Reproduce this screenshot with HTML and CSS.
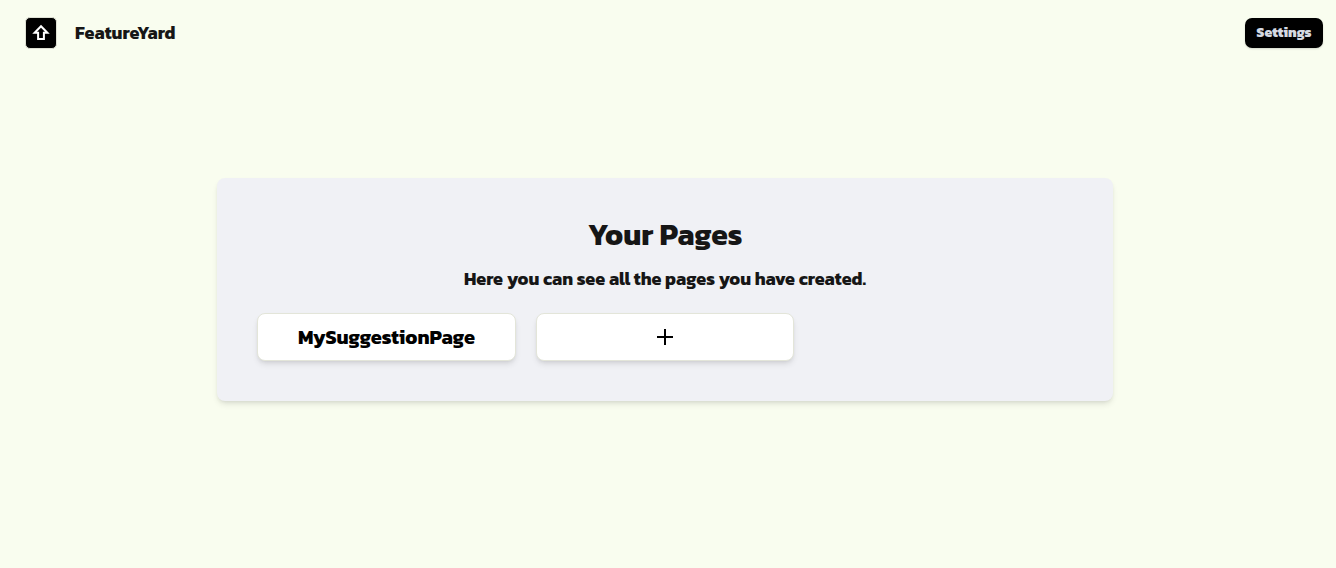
FILE: index.html
```html
<!DOCTYPE html>
<html lang="en">
<head>
  <meta charset="UTF-8">
  <title>FeatureYard</title>
  <link rel="stylesheet" href="styles.css">
</head>
<body>
  <header class="navbar">
    <a class="brand">
      <span class="logo">
        <svg width="20" height="20" viewBox="0 0 20 20" fill="none" stroke="#fff" stroke-width="2">
          <path d="M10 3.2 L3.6 9.8 H7.1 V16.1 H12.9 V9.8 H16.4 Z"/>
        </svg>
      </span>
      <span class="brand-name">FeatureYard</span>
    </a>
    <button class="settings">Settings</button>
  </header>

  <main class="content">
    <section class="panel">
      <h1>Your Pages</h1>
      <p class="subtitle">Here you can see all the pages you have created.</p>
      <div class="pages">
        <a class="page-card"><span>MySuggestionPage</span></a>
        <a class="page-card">
          <svg width="16" height="16" viewBox="0 0 16 16" stroke="#000" stroke-width="2">
            <path d="M8 0 V16 M0 8 H16"/>
          </svg>
        </a>
      </div>
    </section>
  </main>
</body>
</html>
```

FILE: styles.css
```css
* {
  box-sizing: border-box;
}

body {
  margin: 0;
  min-height: 100vh;
  display: flex;
  flex-direction: column;
  background-color: #f9fdef;
  color: #161616;
  font-family: Kanit, "Noto Sans", sans-serif;
  font-weight: 700;
}

.navbar {
  display: flex;
  justify-content: space-between;
  align-items: center;
  height: 66px;
  padding: 0 13px 0 25px;
}

.brand {
  display: flex;
  align-items: center;
  gap: 18px;
}

.logo {
  display: flex;
  align-items: center;
  justify-content: center;
  width: 32px;
  height: 32px;
  border: 1px solid #dfe1d4;
  border-radius: 5px;
  background-color: #000;
}

.brand-name {
  font-size: 18px;
  line-height: 28px;
}

.settings {
  width: 78px;
  height: 30px;
  padding: 0;
  border: none;
  border-radius: 7px;
  background-color: #000;
  color: #d5d9e2;
  font: inherit;
  font-size: 14px;
  font-weight: 800;
  line-height: 20px;
  box-shadow: 0 1px 2px rgba(0, 0, 0, 0.15);
}

.content {
  display: flex;
  justify-content: center;
  padding: 112px 6px 0 0;
}

.panel {
  width: 895.6px;
  height: 223px;
  padding: 40px;
  border-radius: 8px;
  background-color: #f0f1f5;
  text-align: center;
  box-shadow: 0 4px 6px -1px rgba(0, 0, 0, 0.1), 0 2px 4px -2px rgba(0, 0, 0, 0.1);
}

h1 {
  margin: 0;
  font-size: 30px;
  line-height: 34px;
}

.subtitle {
  margin: 13px 0 20px;
  font-size: 18px;
  line-height: 28px;
}

.pages {
  display: grid;
  grid-template-columns: repeat(3, 1fr);
  gap: 20px;
}

.page-card {
  display: flex;
  align-items: center;
  justify-content: center;
  height: 48px;
  border: 1px solid #e3e5d9;
  border-radius: 8px;
  background-color: #fff;
  color: #000;
  font-size: 20px;
  box-shadow: 0 4px 6px -1px rgba(0, 0, 0, 0.1), 0 2px 4px -2px rgba(0, 0, 0, 0.1);
}
```
